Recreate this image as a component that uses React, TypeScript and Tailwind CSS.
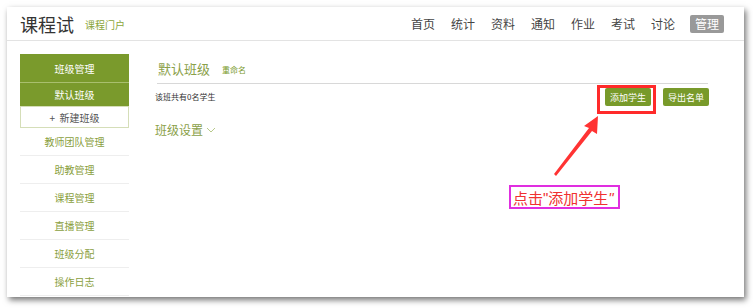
import React from "react";

const font = { fontFamily: '"Noto Sans CJK SC", "Noto Sans", sans-serif' };
const latin = { fontFamily: '"Liberation Sans", sans-serif' };

export default function App() {
  const nav = ["首页", "统计", "资料", "通知", "作业", "考试", "讨论"];
  const items = ["教师团队管理", "助教管理", "课程管理", "直播管理", "班级分配", "操作日志"];
  return (
    <div className="w-[753px] h-[308px] bg-white pt-[7px] pl-[7px] overflow-hidden" style={font}>
      <div className="relative w-[737px] h-[290px] bg-white shadow-[2px_3px_6px_rgba(0,0,0,0.55)]">
        {/* header */}
        <div className="h-[34px] border-b border-[#e3e3e3] flex items-center pl-[13px] pr-[20px]">
          <span className="text-[18px] leading-none text-[#333]">课程试</span>
          <span className="ml-[11px] mt-[3px] text-[10px] leading-none text-[#8aa53a]">课程门户</span>
          <div className="ml-auto flex items-center gap-[16px] text-[12px] leading-none text-[#444] whitespace-nowrap">
            {nav.map((n) => (
              <span key={n}>{n}</span>
            ))}
            <span className="bg-[#999] text-white px-[5px] py-[3px] rounded-[2px] -ml-[1px]">管理</span>
          </div>
        </div>
        <div className="flex pl-[13px] pt-[13px]">
          {/* sidebar */}
          <div className="w-[109px] flex flex-col text-[10px]">
            <div className="h-[28px] bg-[#7a9a2c] text-white flex items-center justify-center">班级管理</div>
            <div className="h-[24px] bg-[#7a9a2c] border-t border-[#a9bf6e] text-white flex items-center justify-center">默认班级</div>
            <div className="h-[22px] border border-[#d5deb8] text-[#555] flex items-center justify-center">+&nbsp;&nbsp;新建班级</div>
            {items.map((t) => (
              <div key={t} className="h-[28px] border-b border-[#eeeeee] text-[#8aa040] flex items-center justify-center">{t}</div>
            ))}
          </div>
          {/* main */}
          <div className="ml-[26px] w-[555px] flex flex-col">
            <div className="h-[30px] mx-[2px] border-b border-[#d8d8d8] flex items-center pl-[1px]">
              <span className="text-[13px] text-[#8aa048] leading-none">默认班级</span>
              <span className="ml-[12px] mt-[2px] text-[8px] text-[#7a9a2c] leading-none">重命名</span>
            </div>
            <div className="flex items-center h-[26px]">
              <span className="text-[8px] text-[#333] leading-none">该班共有0名学生</span>
              <div className="ml-auto flex gap-[12px] pr-[1px]">
                <button className="w-[46px] h-[18px] bg-[#789a2a] text-white text-[9px] rounded-[2px] leading-none">添加学生</button>
                <button className="w-[46px] h-[18px] bg-[#789a2a] text-white text-[9px] rounded-[2px] leading-none">导出名单</button>
              </div>
            </div>
            <div className="mt-[14px] flex items-center text-[12px] text-[#8aa048] leading-none">
              班级设置
              <svg width="10" height="8" viewBox="0 0 10 8" className="ml-[3px]">
                <path d="M1 2 L5 6 L9 2" fill="none" stroke="#b8c98a" strokeWidth="1" />
              </svg>
            </div>
          </div>
        </div>
        {/* red highlight box */}
        <div className="absolute left-[590px] top-[78px] w-[59px] h-[29px] border-[3px] border-[#ff2a2a]" />
        {/* arrow */}
        <svg className="absolute left-[540px] top-[105px]" width="60" height="70" viewBox="0 0 60 70">
          <polygon points="51,4 50,22 45,19 9,64 7,62 42,16 37,14" fill="#ff3333" />
        </svg>
        {/* annotation */}
        <div className="absolute left-[502px] top-[178px] w-[111px] h-[24px] pl-[2px] border-[2px] border-[#e02ee0] flex items-center text-[15px] text-[#f03030] leading-none whitespace-nowrap">
          点击<span style={latin}>"</span>添加学生<span style={latin} className="italic">"</span>
        </div>
      </div>
    </div>
  );
}
